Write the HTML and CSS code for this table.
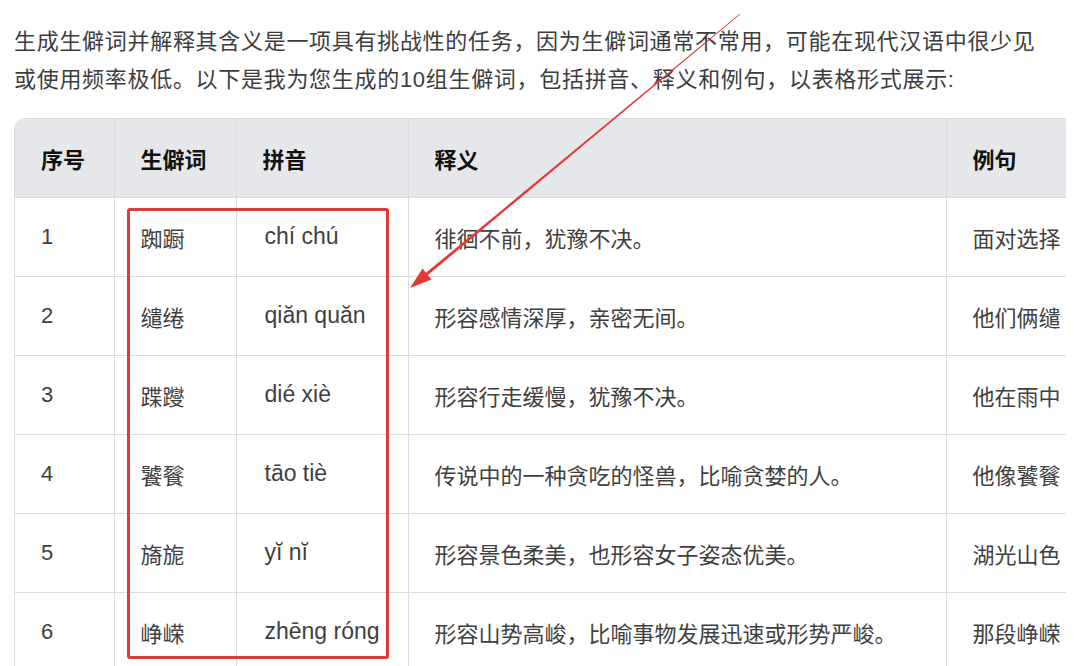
FILE: index.html
```html
<!DOCTYPE html>
<html lang="zh">
<head>
  <meta charset="UTF-8">
  <title>生僻词</title>
  <link rel="stylesheet" href="styles.css">
</head>
<body>
  <p class="intro">生成生僻词并解释其含义是一项具有挑战性的任务，因为生僻词通常不常用，可能在现代汉语中很少见或使用频率极低。以下是我为您生成的10组生僻词，包括拼音、释义和例句，以表格形式展示:</p>
  <div class="table-wrap">
    <table>
      <colgroup>
        <col class="c-no">
        <col class="c-word">
        <col class="c-py">
        <col class="c-mean">
        <col class="c-ex">
      </colgroup>
      <thead>
        <tr><th>序号</th><th>生僻词</th><th>拼音</th><th>释义</th><th>例句</th></tr>
      </thead>
      <tbody>
        <tr><td>1</td><td>踟蹰</td><td class="py">chí chú</td><td>徘徊不前，犹豫不决。</td><td>面对选择</td></tr>
        <tr><td>2</td><td>缱绻</td><td class="py">qiăn quăn</td><td>形容感情深厚，亲密无间。</td><td>他们俩缱</td></tr>
        <tr><td>3</td><td>蹀躞</td><td class="py">dié xiè</td><td>形容行走缓慢，犹豫不决。</td><td>他在雨中</td></tr>
        <tr><td>4</td><td>饕餮</td><td class="py">tāo tiè</td><td>传说中的一种贪吃的怪兽，比喻贪婪的人。</td><td>他像饕餮</td></tr>
        <tr><td>5</td><td>旖旎</td><td class="py">yĭ nĭ</td><td>形容景色柔美，也形容女子姿态优美。</td><td>湖光山色</td></tr>
        <tr><td>6</td><td>峥嵘</td><td class="py">zhēng róng</td><td>形容山势高峻，比喻事物发展迅速或形势严峻。</td><td>那段峥嵘</td></tr>
      </tbody>
    </table>
  </div>

  <!-- annotation drawn over the screenshot -->
  <div class="mark-box"></div>
  <svg class="mark-arrow" width="1080" height="666" viewBox="0 0 1080 666">
    <polygon fill="#e53935" points="739.7,13.7 740.3,14.3 427.9,275.1 431.4,279.4 410,288 422.5,268.6 426.0,272.8"/>
  </svg>
</body>
</html>
```

FILE: styles.css
```css
* {
  box-sizing: border-box;
}
body {
  margin: 0;
  padding: 23px 14px 0;
  background: #fff;
  font-family: "Liberation Sans", "Noto Sans CJK SC", sans-serif;
  color: #3d3d3d;
  overflow: hidden;
  height: 666px;
}
.intro {
  max-width: 1030px;
  margin: 0 0 19px;
  font-size: 22px;
  line-height: 38px;
  letter-spacing: 0.7px;
}
.table-wrap {
  width: 1052px;
  overflow: hidden;
  border-top-left-radius: 12px;
  border-left: 1px solid #dcdcdc;
  border-top: 1px solid #dcdcdc;
}
table {
  width: 1300px;
  table-layout: fixed;
  border-collapse: collapse;
  font-size: 22px;
}
.c-no { width: 99px; }
.c-word { width: 122px; }
.c-py { width: 172px; }
.c-mean { width: 538px; }
.c-ex { width: 369px; }
th, td {
  height: 79px;
  padding: 0 0 0 26px;
  text-align: left;
  white-space: nowrap;
  overflow: hidden;
  border-right: 1px solid #dcdcdc;
  border-bottom: 1px solid #dcdcdc;
}
th {
  height: 78px;
  background: #e6e7ea;
  color: #111;
  font-weight: bold;
}
td {
  color: #3f3f3f;
}
td.py {
  padding-left: 28px;
  font-size: 23px;
}
.mark-box {
  position: absolute;
  left: 127px;
  top: 208px;
  width: 262px;
  height: 451px;
  border: 3px solid #e0393e;
  border-radius: 3px;
}
.mark-arrow {
  position: absolute;
  left: 0;
  top: 0;
  pointer-events: none;
}
```
